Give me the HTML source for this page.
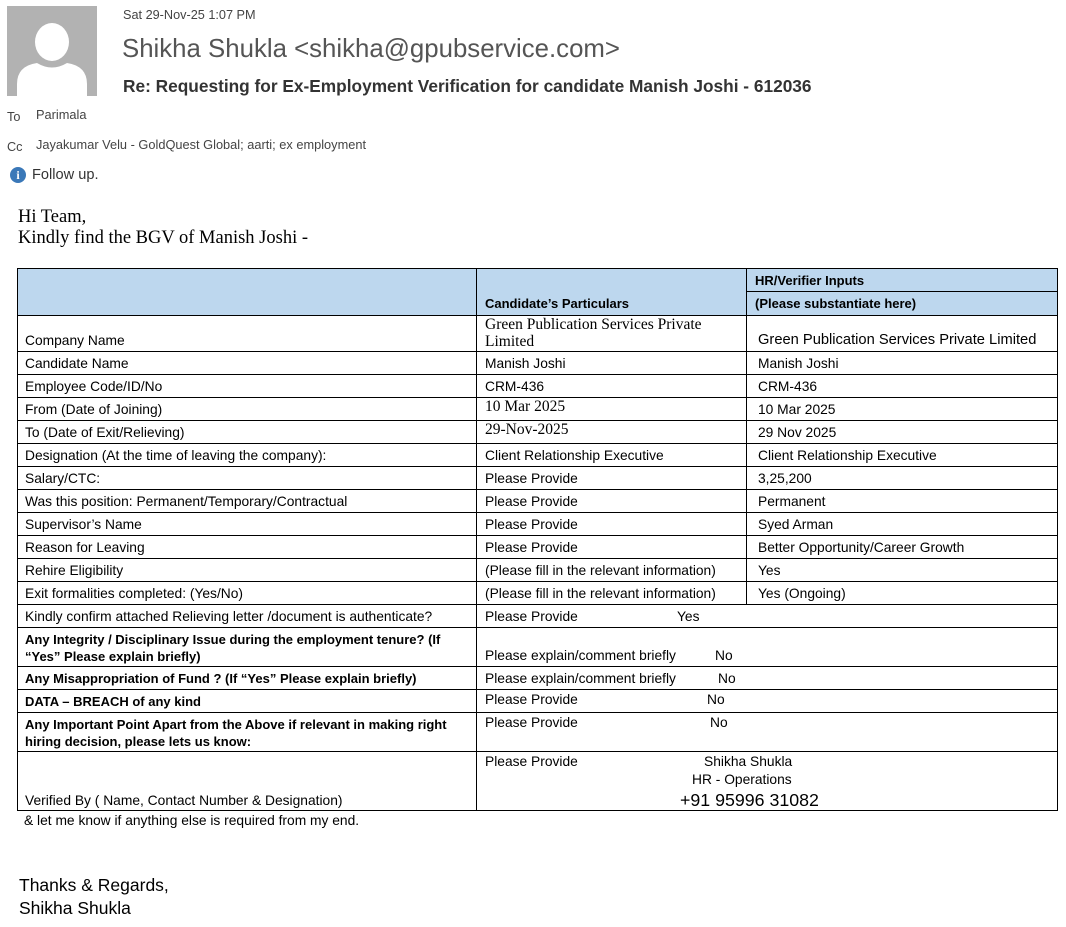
<!DOCTYPE html>
<html><head><meta charset="utf-8"><style>
body{margin:0;width:1066px;height:927px;background:#fff;position:relative;overflow:hidden;font-family:"Liberation Sans",sans-serif}
.t{position:absolute;font-size:13.8px;line-height:16px;white-space:nowrap;color:#000}
.b{font-weight:bold;font-size:13px}
.s{font-family:"Liberation Serif",serif;font-size:15.5px}
.h{position:absolute;height:1px;background:#000}
.v{position:absolute;width:1px;background:#000}
.g{color:#444}
</style></head><body>
<div style="position:absolute;left:7px;top:6px;width:90px;height:90px;background:#b2b2b2;overflow:hidden">
<svg width="90" height="90" viewBox="0 0 90 90"><ellipse cx="45" cy="36" rx="17" ry="19" fill="#fff"/><path d="M10 90 L10 78 Q10 60 30 57 Q45 66 60 57 Q80 60 80 78 L80 90 Z" fill="#fff"/></svg></div>
<div class="t g" style="left:123px;top:7px;font-size:12.7px">Sat 29-Nov-25 1:07 PM</div>
<div class="t" style="left:122px;top:33px;font-size:25.8px;line-height:32px;color:#555">Shikha Shukla &lt;shikha@gpubservice.com&gt;</div>
<div class="t" style="left:123px;top:75px;font-size:17.3px;line-height:22px;color:#333;font-weight:bold">Re: Requesting for Ex-Employment Verification for candidate Manish Joshi - 612036</div>
<div class="t g" style="left:7px;top:109px;font-size:12.7px">To</div>
<div class="t g" style="left:36px;top:107px;font-size:12.8px">Parimala</div>
<div class="t g" style="left:7px;top:139px;font-size:12.7px">Cc</div>
<div class="t g" style="left:36px;top:137px;font-size:12.8px">Jayakumar Velu - GoldQuest Global; aarti; ex employment</div>
<div style="position:absolute;left:10px;top:167px;width:16px;height:16px;border-radius:50%;background:#3a78b8;color:#fff;font:bold 12px/16px 'Liberation Serif',serif;text-align:center">i</div>
<div class="t" style="left:32px;top:166px;font-size:14.6px;line-height:18px;color:#333">Follow up.</div>
<div class="t" style="left:18px;top:207px;font-family:'Liberation Serif',serif;font-size:18.5px;line-height:21px">Hi Team,<br>Kindly find the BGV of Manish Joshi -</div>

<div style="position:absolute;left:17px;top:268px;width:1040px;height:47px;background:#bdd7ee"></div>
<div class="h" style="left:17px;width:1041px;top:268px"></div>
<div class="h" style="left:746px;width:311px;top:291px"></div>
<div class="h" style="left:17px;width:1041px;top:315px"></div>
<div class="h" style="left:17px;width:1041px;top:351px"></div>
<div class="h" style="left:17px;width:1041px;top:374px"></div>
<div class="h" style="left:17px;width:1041px;top:397px"></div>
<div class="h" style="left:17px;width:1041px;top:420px"></div>
<div class="h" style="left:17px;width:1041px;top:443px"></div>
<div class="h" style="left:17px;width:1041px;top:466px"></div>
<div class="h" style="left:17px;width:1041px;top:489px"></div>
<div class="h" style="left:17px;width:1041px;top:512px"></div>
<div class="h" style="left:17px;width:1041px;top:535px"></div>
<div class="h" style="left:17px;width:1041px;top:558px"></div>
<div class="h" style="left:17px;width:1041px;top:581px"></div>
<div class="h" style="left:17px;width:1041px;top:604px"></div>
<div class="h" style="left:17px;width:1041px;top:627px"></div>
<div class="h" style="left:17px;width:1041px;top:666px"></div>
<div class="h" style="left:17px;width:1041px;top:689px"></div>
<div class="h" style="left:17px;width:1041px;top:712px"></div>
<div class="h" style="left:17px;width:1041px;top:751px"></div>
<div class="h" style="left:17px;width:1041px;top:810px"></div>
<div class="v" style="left:17px;top:268px;height:543px"></div>
<div class="v" style="left:476px;top:268px;height:543px"></div>
<div class="v" style="left:746px;top:268px;height:336px"></div>
<div class="v" style="left:1057px;top:268px;height:543px"></div>

<div class="t b" style="left:485px;top:296px">Candidate’s Particulars</div>
<div class="t b" style="left:755px;top:273px">HR/Verifier Inputs</div>
<div class="t b" style="left:755px;top:296px">(Please substantiate here)</div>

<div class="t" style="left:25px;top:333px">Company Name</div>
<div class="t" style="left:25px;top:356px">Candidate Name</div>
<div class="t" style="left:25px;top:379px">Employee Code/ID/No</div>
<div class="t" style="left:25px;top:402px">From (Date of Joining)</div>
<div class="t" style="left:25px;top:425px">To (Date of Exit/Relieving)</div>
<div class="t" style="left:25px;top:448px">Designation (At the time of leaving the company):</div>
<div class="t" style="left:25px;top:471px">Salary/CTC:</div>
<div class="t" style="left:25px;top:494px">Was this position: Permanent/Temporary/Contractual</div>
<div class="t" style="left:25px;top:517px">Supervisor’s Name</div>
<div class="t" style="left:25px;top:540px">Reason for Leaving</div>
<div class="t" style="left:25px;top:563px">Rehire Eligibility</div>
<div class="t" style="left:25px;top:586px">Exit formalities completed: (Yes/No)</div>
<div class="t" style="left:25px;top:609px">Kindly confirm attached Relieving letter /document is authenticate?</div>
<div class="t b" style="left:25px;top:631px;line-height:17px">Any Integrity / Disciplinary Issue during the employment tenure? (If<br>“Yes” Please explain briefly)</div>
<div class="t b" style="left:25px;top:671px">Any Misappropriation of Fund ? (If “Yes” Please explain briefly)</div>
<div class="t b" style="left:25px;top:694px">DATA – BREACH of any kind</div>
<div class="t b" style="left:25px;top:716px;line-height:17px">Any Important Point Apart from the Above if relevant in making right<br>hiring decision, please lets us know:</div>
<div class="t" style="left:25px;top:793px">Verified By ( Name, Contact Number &amp; Designation)</div>

<div class="t s" style="left:485px;top:316px;line-height:17px">Green Publication Services Private<br>Limited</div>
<div class="t" style="left:485px;top:356px">Manish Joshi</div>
<div class="t" style="left:485px;top:379px">CRM-436</div>
<div class="t s" style="left:485px;top:399px">10 Mar 2025</div>
<div class="t s" style="left:485px;top:422px">29-Nov-2025</div>
<div class="t" style="left:485px;top:448px">Client Relationship Executive</div>
<div class="t" style="left:485px;top:471px">Please Provide</div>
<div class="t" style="left:485px;top:494px">Please Provide</div>
<div class="t" style="left:485px;top:517px">Please Provide</div>
<div class="t" style="left:485px;top:540px">Please Provide</div>
<div class="t" style="left:485px;top:563px">(Please fill in the relevant information)</div>
<div class="t" style="left:485px;top:586px">(Please fill in the relevant information)</div>
<div class="t" style="left:485px;top:609px">Please Provide</div>
<div class="t" style="left:677px;top:609px">Yes</div>
<div class="t" style="left:485px;top:648px">Please explain/comment briefly</div>
<div class="t" style="left:715px;top:648px">No</div>
<div class="t" style="left:485px;top:671px">Please explain/comment briefly</div>
<div class="t" style="left:718px;top:671px">No</div>
<div class="t" style="left:485px;top:692px">Please Provide</div>
<div class="t" style="left:707px;top:692px">No</div>
<div class="t" style="left:485px;top:715px">Please Provide</div>
<div class="t" style="left:710px;top:715px">No</div>
<div class="t" style="left:485px;top:754px">Please Provide</div>
<div class="t" style="left:704px;top:754px">Shikha Shukla</div>
<div class="t" style="left:692px;top:772px">HR - Operations</div>
<div class="t" style="left:680px;top:790px;font-size:17.8px;line-height:20px">+91 95996 31082</div>

<div class="t" style="left:758px;top:332px;font-size:14.7px">Green Publication Services Private Limited</div>
<div class="t" style="left:758px;top:356px">Manish Joshi</div>
<div class="t" style="left:758px;top:379px">CRM-436</div>
<div class="t" style="left:758px;top:402px">10 Mar 2025</div>
<div class="t" style="left:758px;top:425px">29 Nov 2025</div>
<div class="t" style="left:758px;top:448px">Client Relationship Executive</div>
<div class="t" style="left:758px;top:471px">3,25,200</div>
<div class="t" style="left:758px;top:494px">Permanent</div>
<div class="t" style="left:758px;top:517px">Syed Arman</div>
<div class="t" style="left:758px;top:540px">Better Opportunity/Career Growth</div>
<div class="t" style="left:758px;top:563px">Yes</div>
<div class="t" style="left:758px;top:586px">Yes (Ongoing)</div>

<div class="t" style="left:24px;top:813px">&amp; let me know if anything else is required from my end.</div>
<div class="t" style="left:19px;top:874px;font-size:17.5px;line-height:23px">Thanks &amp; Regards,<br>Shikha Shukla</div>
</body></html>
